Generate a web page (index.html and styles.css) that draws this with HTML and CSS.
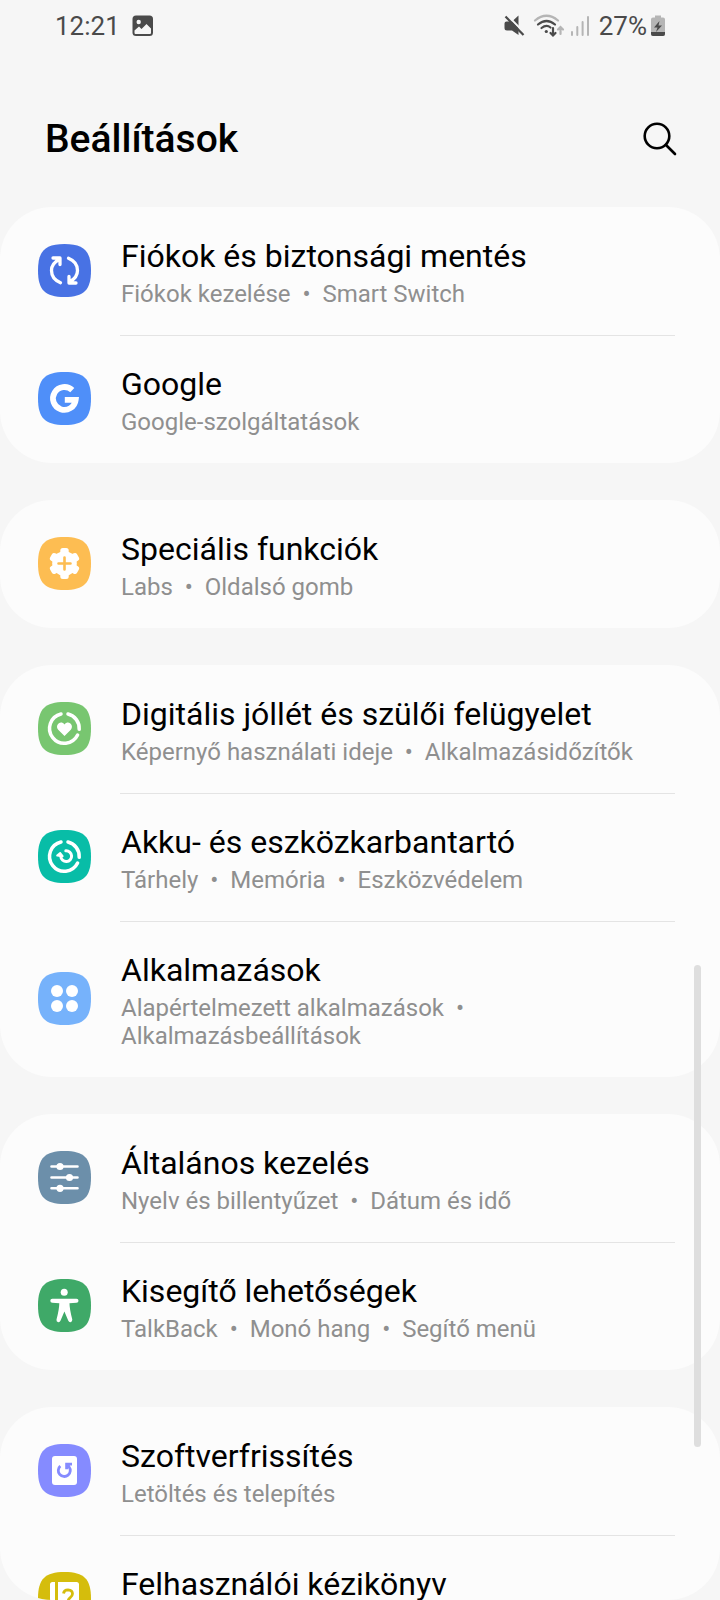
FILE: index.html
```html
<!DOCTYPE html>
<html lang="hu">
<head>
  <meta charset="UTF-8" />
  <meta name="viewport" content="width=device-width, initial-scale=1.0"/>
  <title>Beállítások</title>
  <link rel="stylesheet" href="styles.css">
</head>
<body>
  <div class="status-bar">
    <div class="status-group">
      <span>12:21</span>
      <svg class="status-photo" width="22" height="22" viewBox="0 0 22 22">
        <rect x="0.5" y="0.5" width="20.5" height="20.5" rx="3.5" fill="#4a4a4a"/>
        <circle cx="6.7" cy="7" r="2.2" fill="#f6f6f6"/>
        <path d="M2.5 15.5 L7 11.5 L9.5 14 L14.5 9 L19 13.5 V18 Q19 19 18 19 H3.5 Q2.5 19 2.5 18Z" fill="#f6f6f6"/>
      </svg>
    </div>
    <div class="status-group">
      <svg class="status-mute" width="21" height="22" viewBox="0 0 21 22">
        <path d="M2.5 6.5 H8 L14.5 0.5 V20 L8 15.5 H3 Q0.5 15.5 0.5 13 V8.5 Q0.5 6.5 2.5 6.5Z" fill="#4a4a4a"/>
        <path d="M3.5 0.5 L21 18.5" stroke="#f6f6f6" stroke-width="2"/>
        <path d="M1.5 1.5 L19.5 20" stroke="#4a4a4a" stroke-width="2.2"/>
      </svg>
      <svg class="status-wifi" width="32" height="24" viewBox="0 0 32 24">
        <g fill="none" stroke-width="2.2" stroke-linecap="round">
          <path d="M2 6.5 Q13.5 -3 25 6.5" stroke="#b5b5b5"/>
          <path d="M5 10.5 Q13.5 3.5 22 10.5 M8.5 14 Q13.5 10 17.5 13.5" stroke="#4a4a4a"/>
          <path d="M20 14 V21 M17.5 19 L20 21.5 L22.5 19" stroke="#4a4a4a"/>
          <path d="M27.5 20 V13.5 M25 15.5 L27.5 13 L30 15.5" stroke="#b5b5b5"/>
        </g>
        <circle cx="13.3" cy="17.5" r="1.6" fill="#4a4a4a"/>
      </svg>
      <svg class="status-signal" width="20" height="22" viewBox="0 0 20 22">
        <path d="M2 17 V20 M7.3 12 V20 M12.6 7 V20 M18 2 V20" stroke="#b5b5b5" stroke-width="2" stroke-linecap="round"/>
      </svg>
      <span>27%</span>
      <svg class="status-battery" width="14" height="22" viewBox="0 0 14 22">
        <path d="M4 0.5 H10 V2.5 H12 Q14 2.5 14 4.5 V19 Q14 21 12 21 H2 Q0 21 0 19 V4.5 Q0 2.5 2 2.5 H4Z" fill="#b5b5b5"/>
        <path d="M0 17 H14 V19 Q14 21 12 21 H2 Q0 21 0 19Z" fill="#4a4a4a"/>
        <path d="M8.5 6 L3 12.5 H6.5 L5 17 L11 10.5 H7.5Z" fill="#4a4a4a"/>
      </svg>
    </div>
  </div>

  <header class="header">
    <h1>Beállítások</h1>
    <button type="button" class="search-btn" aria-label="Keresés">
      <svg width="34" height="34" viewBox="0 0 34 34" fill="none" stroke="#000" stroke-width="2.6" stroke-linecap="round">
        <circle cx="14" cy="14" r="12.3"/>
        <path d="M23 23 L32 32"/>
      </svg>
    </button>
  </header>

  <main class="settings">
    <ul class="card">
      <li>
        <a class="row" href="#">
          <svg class="icon" viewBox="0 0 53 53">
            <path fill="#4872e4" d="M26.5 0C7 0 0 7 0 26.5S7 53 26.5 53 53 46 53 26.5 46 0 26.5 0Z"/>
            <g fill="none" stroke="#fff" stroke-width="3.3" stroke-linecap="round" stroke-linejoin="round">
              <path d="M15 14 H22 V20.5 M21 15.5 Q13.5 19.5 13.5 26.5 Q13.5 35 22.5 38.7"/>
              <path d="M38 39 H31 V32.5 M32 37.5 Q39.5 33.5 39.5 26.5 Q39.5 18 30.5 14.3"/>
            </g>
          </svg>
          <span class="text">
            <span class="title">Fiókok és biztonsági mentés</span>
            <span class="desc">Fiókok kezelése&nbsp;&nbsp;•&nbsp; Smart Switch</span>
          </span>
        </a>
      </li>
      <li>
        <a class="row" href="#">
          <svg class="icon" viewBox="0 0 53 53">
            <path fill="#4f8ff9" d="M26.5 0C7 0 0 7 0 26.5S7 53 26.5 53 53 46 53 26.5 46 0 26.5 0Z"/>
            <path fill="none" stroke="#fff" stroke-width="5.8" d="M34.3 18.2 A11.4 11.4 0 1 0 37.7 27.8 H26.8"/>
          </svg>
          <span class="text">
            <span class="title">Google</span>
            <span class="desc">Google-szolgáltatások</span>
          </span>
        </a>
      </li>
    </ul>

    <ul class="card">
      <li>
        <a class="row" href="#">
          <svg class="icon" viewBox="0 0 53 53">
            <path fill="#fdbd52" d="M26.5 0C7 0 0 7 0 26.5S7 53 26.5 53 53 46 53 26.5 46 0 26.5 0Z"/>
            <g fill="#fff">
              <circle cx="26.5" cy="26.5" r="12.3"/>
              <rect x="22.3" y="11" width="8.4" height="31" rx="2.5"/>
              <rect x="22.3" y="11" width="8.4" height="31" rx="2.5" transform="rotate(60 26.5 26.5)"/>
              <rect x="22.3" y="11" width="8.4" height="31" rx="2.5" transform="rotate(120 26.5 26.5)"/>
            </g>
            <path d="M26.5 20.5 V32.5 M20.5 26.5 H32.5" stroke="#fdbd52" stroke-width="2.6" stroke-linecap="round"/>
          </svg>
          <span class="text">
            <span class="title">Speciális funkciók</span>
            <span class="desc">Labs&nbsp;&nbsp;•&nbsp; Oldalsó gomb</span>
          </span>
        </a>
      </li>
    </ul>

    <ul class="card">
      <li>
        <a class="row" href="#">
          <svg class="icon" viewBox="0 0 53 53">
            <path fill="#78c670" d="M26.5 0C7 0 0 7 0 26.5S7 53 26.5 53 53 46 53 26.5 46 0 26.5 0Z"/>
            <path fill="none" stroke="#fff" stroke-width="3.5" stroke-linecap="round" d="M30 12 A14.8 14.8 0 0 1 41.2 27.3 M39.6 33 A14.8 14.8 0 1 1 23 12"/>
            <path fill="#fff" d="M26.5 34 L20.2 27.7 C16.5 23.5 22.5 17.5 26.5 22.5 C30.5 17.5 36.5 23.5 32.8 27.7Z"/>
          </svg>
          <span class="text">
            <span class="title">Digitális jóllét és szülői felügyelet</span>
            <span class="desc">Képernyő használati ideje&nbsp;&nbsp;•&nbsp; Alkalmazásidőzítők</span>
          </span>
        </a>
      </li>
      <li>
        <a class="row" href="#">
          <svg class="icon" viewBox="0 0 53 53">
            <path fill="#08bda7" d="M26.5 0C7 0 0 7 0 26.5S7 53 26.5 53 53 46 53 26.5 46 0 26.5 0Z"/>
            <g fill="none" stroke="#fff" stroke-width="3.5" stroke-linecap="round" stroke-linejoin="round">
              <path d="M30 12 A14.8 14.8 0 0 1 41.2 27.3 M39.6 33 A14.8 14.8 0 1 1 23 12"/>
              <path stroke-width="3" d="M27.8 20.8 A5.4 5.4 0 1 1 22.8 26.5"/>
              <path stroke-width="2" fill="#fff" d="M19.2 25.6 L22.2 23 L24.6 26.2Z"/>
            </g>
          </svg>
          <span class="text">
            <span class="title">Akku- és eszközkarbantartó</span>
            <span class="desc">Tárhely&nbsp;&nbsp;•&nbsp; Memória&nbsp;&nbsp;•&nbsp; Eszközvédelem</span>
          </span>
        </a>
      </li>
      <li>
        <a class="row" href="#">
          <svg class="icon" viewBox="0 0 53 53">
            <path fill="#76b2fb" d="M26.5 0C7 0 0 7 0 26.5S7 53 26.5 53 53 46 53 26.5 46 0 26.5 0Z"/>
            <g fill="#fff">
              <circle cx="19" cy="19" r="6"/>
              <circle cx="34" cy="19" r="6"/>
              <circle cx="19" cy="34" r="6"/>
              <circle cx="34" cy="34" r="6"/>
            </g>
          </svg>
          <span class="text">
            <span class="title">Alkalmazások</span>
            <span class="desc">Alapértelmezett alkalmazások&nbsp;&nbsp;•&nbsp; Alkalmazásbeállítások</span>
          </span>
        </a>
      </li>
    </ul>

    <ul class="card">
      <li>
        <a class="row" href="#">
          <svg class="icon" viewBox="0 0 53 53">
            <path fill="#6c8faa" d="M26.5 0C7 0 0 7 0 26.5S7 53 26.5 53 53 46 53 26.5 46 0 26.5 0Z"/>
            <path d="M13.5 15.5 H39.5 M13.5 26.5 H39.5 M13.5 37.3 H39.5" stroke="#fff" stroke-width="2.6" stroke-linecap="round"/>
            <g fill="#fff">
              <circle cx="22" cy="15.5" r="3.6"/>
              <circle cx="31.5" cy="26.5" r="3.6"/>
              <circle cx="22" cy="37.3" r="3.6"/>
            </g>
          </svg>
          <span class="text">
            <span class="title">Általános kezelés</span>
            <span class="desc">Nyelv és billentyűzet&nbsp;&nbsp;•&nbsp; Dátum és idő</span>
          </span>
        </a>
      </li>
      <li>
        <a class="row" href="#">
          <svg class="icon" viewBox="0 0 53 53">
            <path fill="#3fa968" d="M26.5 0C7 0 0 7 0 26.5S7 53 26.5 53 53 46 53 26.5 46 0 26.5 0Z"/>
            <circle cx="26.2" cy="13.3" r="3.5" fill="#fff"/>
            <path d="M14.3 19.7 H38.5 Q40.5 19.7 40.5 21.7 Q40.5 23.7 38.5 23.8 L31.5 24.3 Q31.5 30 34.3 40.5 Q34.5 42.8 32.5 43.2 Q31 43.4 30.2 41.5 L26.4 32.5 L22.6 41.5 Q21.8 43.4 20.2 43.2 Q18 42.8 18.5 40.5 Q21.3 30 21.3 24.3 L14.3 23.8 Q12.3 23.7 12.3 21.7 Q12.3 19.7 14.3 19.7Z" fill="#fff"/>
          </svg>
          <span class="text">
            <span class="title">Kisegítő lehetőségek</span>
            <span class="desc">TalkBack&nbsp;&nbsp;•&nbsp; Monó hang&nbsp;&nbsp;•&nbsp; Segítő menü</span>
          </span>
        </a>
      </li>
    </ul>

    <ul class="card">
      <li>
        <a class="row" href="#">
          <svg class="icon" viewBox="0 0 53 53">
            <path fill="#858bff" d="M26.5 0C7 0 0 7 0 26.5S7 53 26.5 53 53 46 53 26.5 46 0 26.5 0Z"/>
            <rect x="14" y="12" width="25" height="29" rx="3" fill="#fff"/>
            <path d="M22.3 22 A6 6 0 1 0 31 22.8 L29 20.5 M34 20.2 H28.6 V25.2" fill="none" stroke="#858bff" stroke-width="2.8"/>
          </svg>
          <span class="text">
            <span class="title">Szoftverfrissítés</span>
            <span class="desc">Letöltés és telepítés</span>
          </span>
        </a>
      </li>
      <li>
        <a class="row" href="#">
          <svg class="icon" viewBox="0 0 53 53">
            <path fill="#d5bd0c" d="M26.5 0C7 0 0 7 0 26.5S7 53 26.5 53 53 46 53 26.5 46 0 26.5 0Z"/>
            <path d="M14.5 10 H17 V43 H14.5 Q12 43 12 40.5 V12.5 Q12 10 14.5 10Z M20 10 H38.5 Q41 10 41 12.5 V40.5 Q41 43 38.5 43 H20Z" fill="#fff"/>
            <path d="M25.5 21.5 Q26 17.8 30 17.8 Q34.5 18 34.5 21.8 Q34.5 24 32 25.8 Q30 27.2 30 30 M30 33 V35.5" fill="none" stroke="#d5bd0c" stroke-width="2.8"/>
          </svg>
          <span class="text">
            <span class="title">Felhasználói kézikönyv</span>
          </span>
        </a>
      </li>
    </ul>
    <div class="scroll-thumb"></div>
  </main>
</body>
</html>
```
FILE: styles.css
```css
* {
  box-sizing: border-box;
}

body {
  margin: 0;
  height: 100vh;
  display: flex;
  flex-direction: column;
  overflow: hidden;
  background: #f6f6f6;
  font-family: Roboto, "Noto Sans", sans-serif;
  color: #000;
}

.status-bar {
  display: flex;
  flex: none;
  justify-content: space-between;
  height: 52px;
  padding: 0 55px;
  color: #4a4a4a;
  font-size: 26px;
  line-height: 52px;
}

.status-group {
  display: flex;
  align-items: center;
}

.status-photo {
  margin-left: 12px;
}

.status-wifi {
  margin-left: 8px;
}

.status-signal {
  margin: 0 9px 0 5px;
}

.status-battery {
  margin-left: 4px;
}

.header {
  display: flex;
  flex: none;
  align-items: center;
  justify-content: space-between;
  height: 155px;
  padding: 18px 35px 0 45px;
}

.header h1 {
  margin: 0;
  font-size: 39px;
  font-weight: 500;
}

.search-btn {
  display: flex;
  padding: 8px;
  border: none;
  background: none;
  cursor: pointer;
}

.settings {
  position: relative;
  flex: 1;
  min-height: 0;
  overflow: hidden;
  border-radius: 0 0 52px 52px;
}

.card {
  margin: 0 0 37px;
  padding: 0;
  list-style: none;
  background: #fcfcfc;
  border-radius: 52px;
}

.row {
  display: flex;
  align-items: center;
  min-height: 128px;
  padding: 0 45px 0 38px;
  color: inherit;
  text-decoration: none;
}

.icon {
  flex: none;
  width: 53px;
  height: 53px;
  margin: 0 29px 2px 0;
}

.text {
  flex: 1;
  align-self: stretch;
  padding: 31px 0 27px 1px;
}

li + li .text {
  border-top: 1px solid #e4e4e4;
  padding-top: 30px;
}

.title {
  display: block;
  margin-bottom: 5px;
  font-size: 32px;
  line-height: 37px;
}

.desc {
  display: block;
  color: #8f8f8f;
  font-size: 24px;
  line-height: 28px;
}

/* lies over the list */
.scroll-thumb {
  position: absolute;
  top: 758px;
  right: 19px;
  width: 7px;
  height: 482px;
  border-radius: 4px;
  background: #dedede;
}
```
